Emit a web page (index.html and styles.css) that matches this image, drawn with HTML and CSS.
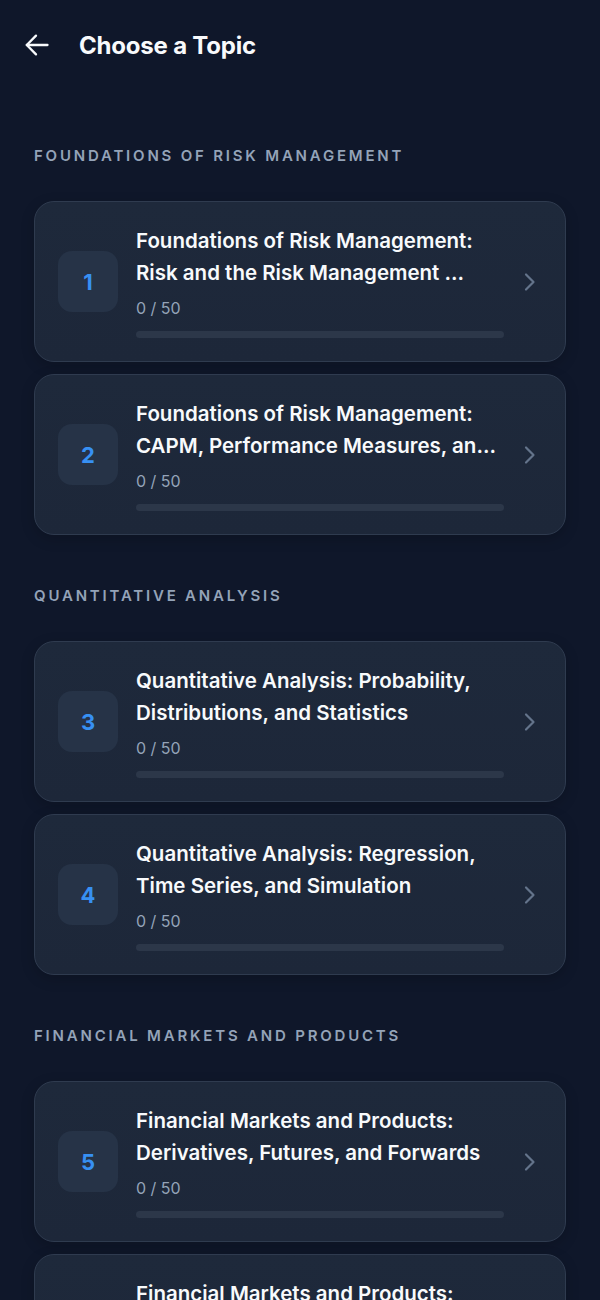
FILE: index.html
```html
<!DOCTYPE html>
<html lang="en">
<head>
<meta charset="utf-8">
<title>Choose a Topic</title>
<link rel="stylesheet" href="styles.css">
</head>
<body>
<header class="topbar">
  <button class="back" aria-label="Back">
    <svg width="24" height="24" viewBox="0 0 24 24" fill="none" stroke="currentColor" stroke-width="2.3" stroke-linecap="round" stroke-linejoin="round"><path d="M22.5 12H1.8"/><path d="M11 2.6L1.8 12l9.2 9.4"/></svg>
  </button>
  <h1 class="title">Choose a Topic</h1>
</header>

<main class="content">
  <section class="group">
    <h2 class="group-label">Foundations of Risk Management</h2>
    <div class="cards">
      <a class="card">
        <div class="num">1</div>
        <div class="info">
          <div class="name">Foundations of Risk Management: Risk and the Risk Management ...</div>
          <div class="count">0 / 50</div>
          <div class="bar"><div class="fill" style="width:0%"></div></div>
        </div>
        <svg class="chev" width="24" height="24" viewBox="0 0 24 24" fill="none" stroke="currentColor" stroke-width="2.2" stroke-linecap="round" stroke-linejoin="round"><path d="M8 4.5l7.5 7.5L8 19.5"/></svg>
      </a>
      <a class="card">
        <div class="num">2</div>
        <div class="info">
          <div class="name">Foundations of Risk Management: CAPM, Performance Measures, an...</div>
          <div class="count">0 / 50</div>
          <div class="bar"><div class="fill" style="width:0%"></div></div>
        </div>
        <svg class="chev" width="24" height="24" viewBox="0 0 24 24" fill="none" stroke="currentColor" stroke-width="2.2" stroke-linecap="round" stroke-linejoin="round"><path d="M8 4.5l7.5 7.5L8 19.5"/></svg>
      </a>
    </div>
  </section>

  <section class="group">
    <h2 class="group-label">Quantitative Analysis</h2>
    <div class="cards">
      <a class="card">
        <div class="num">3</div>
        <div class="info">
          <div class="name">Quantitative Analysis: Probability, Distributions, and Statistics</div>
          <div class="count">0 / 50</div>
          <div class="bar"><div class="fill" style="width:0%"></div></div>
        </div>
        <svg class="chev" width="24" height="24" viewBox="0 0 24 24" fill="none" stroke="currentColor" stroke-width="2.2" stroke-linecap="round" stroke-linejoin="round"><path d="M8 4.5l7.5 7.5L8 19.5"/></svg>
      </a>
      <a class="card">
        <div class="num">4</div>
        <div class="info">
          <div class="name">Quantitative Analysis: Regression, Time Series, and Simulation</div>
          <div class="count">0 / 50</div>
          <div class="bar"><div class="fill" style="width:0%"></div></div>
        </div>
        <svg class="chev" width="24" height="24" viewBox="0 0 24 24" fill="none" stroke="currentColor" stroke-width="2.2" stroke-linecap="round" stroke-linejoin="round"><path d="M8 4.5l7.5 7.5L8 19.5"/></svg>
      </a>
    </div>
  </section>

  <section class="group">
    <h2 class="group-label">Financial Markets and Products</h2>
    <div class="cards">
      <a class="card">
        <div class="num">5</div>
        <div class="info">
          <div class="name">Financial Markets and Products: Derivatives, Futures, and Forwards</div>
          <div class="count">0 / 50</div>
          <div class="bar"><div class="fill" style="width:0%"></div></div>
        </div>
        <svg class="chev" width="24" height="24" viewBox="0 0 24 24" fill="none" stroke="currentColor" stroke-width="2.2" stroke-linecap="round" stroke-linejoin="round"><path d="M8 4.5l7.5 7.5L8 19.5"/></svg>
      </a>
      <a class="card">
        <div class="num">6</div>
        <div class="info">
          <div class="name">Financial Markets and Products: Options, Swaps, and Fixed Income</div>
          <div class="count">0 / 50</div>
          <div class="bar"><div class="fill" style="width:0%"></div></div>
        </div>
        <svg class="chev" width="24" height="24" viewBox="0 0 24 24" fill="none" stroke="currentColor" stroke-width="2.2" stroke-linecap="round" stroke-linejoin="round"><path d="M8 4.5l7.5 7.5L8 19.5"/></svg>
      </a>
    </div>
  </section>
</main>
</body>
</html>
```

FILE: styles.css
```css
* { box-sizing: border-box; }
html, body {
  margin: 0;
  padding: 0;
  background: #0f172a;
}
body {
  font-family: Inter, "Noto Sans", "Liberation Sans", sans-serif;
  color: #f8fafc;
  -webkit-font-smoothing: antialiased;
}

.topbar {
  display: flex;
  align-items: center;
  height: 90px;
  padding: 0 0 0 25px;
}
.back {
  display: flex;
  align-items: center;
  justify-content: center;
  width: 24px;
  height: 24px;
  padding: 0;
  margin: 0 30px 0 0;
  border: 0;
  background: none;
  color: #f8fafc;
}
.title {
  margin: 0;
  font-size: 24px;
  font-weight: 700;
  letter-spacing: -0.2px;
  color: #f8fafc;
}

.content {
  display: flex;
  flex-direction: column;
  gap: 51px;
  padding: 56px 34px 40px;
}
.group-label {
  margin: 0 0 35px;
  font-size: 15px;
  line-height: 20px;
  font-weight: 600;
  letter-spacing: 2.8px;
  text-transform: uppercase;
  color: #94a3b8;
}
.cards {
  display: flex;
  flex-direction: column;
  gap: 12px;
}
.card {
  display: flex;
  align-items: center;
  height: 161px;
  padding: 0 23px;
  background: linear-gradient(180deg, #1e293b 0%, #1d2739 100%);
  border: 1px solid #2f3b4f;
  border-radius: 20px;
  box-shadow: 0 4px 14px rgba(0, 0, 0, 0.18);
}
.num {
  flex: 0 0 60px;
  height: 61px;
  display: flex;
  align-items: center;
  justify-content: center;
  border-radius: 14px;
  background: #263347;
  color: #3790f3;
  font-size: 22px;
  font-weight: 700;
}
.info {
  flex: 1 1 auto;
  min-width: 0;
  margin-left: 18px;
}
.name {
  font-size: 20.5px;
  line-height: 32px;
  font-weight: 600;
  color: #f8fafc;
  letter-spacing: 0;
  display: -webkit-box;
  -webkit-line-clamp: 2;
  -webkit-box-orient: vertical;
  overflow: hidden;
}
.count {
  margin-top: 8px;
  font-size: 16px;
  line-height: 22px;
  color: #94a3b8;
}
.bar {
  margin-top: 12px;
  height: 7px;
  border-radius: 4px;
  background: #2c3749;
  overflow: hidden;
}
.fill {
  height: 100%;
  background: #3790f3;
}
.chev {
  flex: 0 0 24px;
  margin-left: 14px;
  color: #64748b;
}
```
